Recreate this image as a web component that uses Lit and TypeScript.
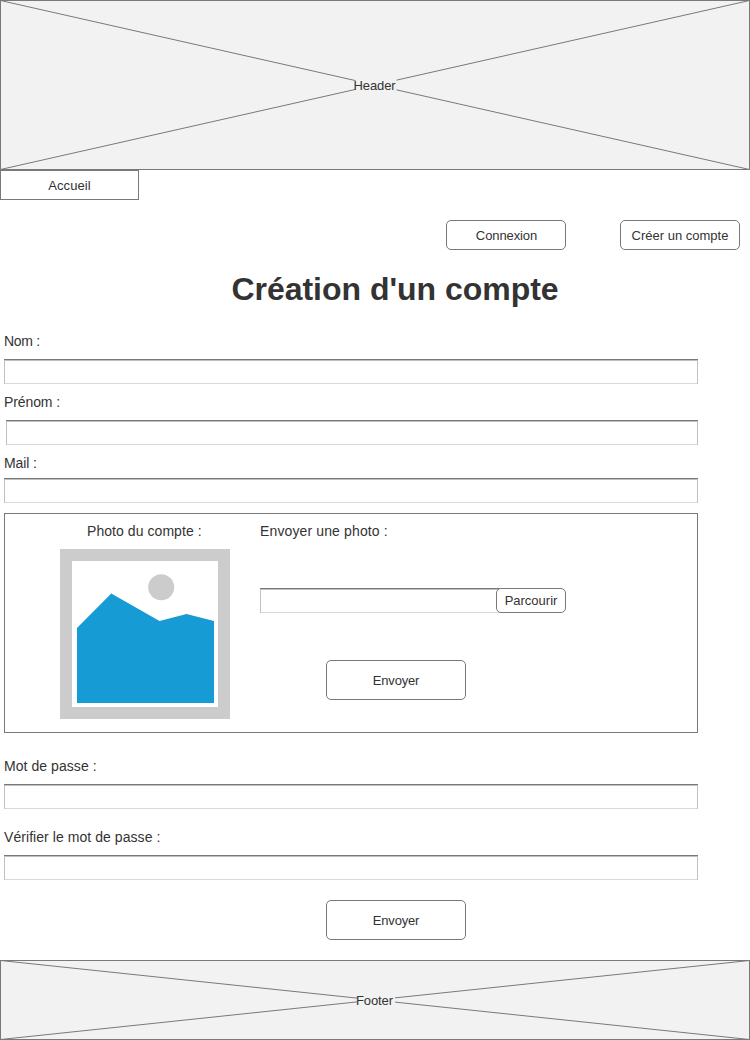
import { LitElement, html, css } from "lit";
import { customElement, property } from "lit/decorators.js";

@customElement("wire-placeholder")
class WirePlaceholder extends LitElement {
  @property() label = "";
  @property({ type: Number }) height = 170;
  @property({ type: Number }) gap = 40;

  static styles = css`
    :host { display: block; }
    .frame { display: grid; place-items: center; background: #f2f2f2; }
    .frame > * { grid-area: 1 / 1; }
    .cross { display: block; }
    .line { stroke: #797979; stroke-width: 1; fill: none; }
    .edge { stroke: #797979; stroke-width: 1; fill: none; shape-rendering: crispEdges; }
    .mask { fill: #f2f2f2; }
    .label { font-size: 13px; line-height: 15px; letter-spacing: -0.1px; padding-right: 1px; }
  `;

  render() {
    const h = this.height;
    return html`<div class="frame">
      <svg class="cross" width="750" height=${h} viewBox="0 0 750 ${h}">
        <path class="line" d="M0.5 0.5L749.5 ${h - 0.5}M0.5 ${h - 0.5}L749.5 0.5" />
        <rect class="mask" x=${375 - this.gap / 2 + 1} y=${h / 2 - 8} width=${this.gap} height="16" />
        <rect class="edge" x="0.5" y="0.5" width="749" height=${h - 1} />
      </svg>
      <span class="label">${this.label}</span>
    </div>`;
  }
}

@customElement("wire-input")
class WireInput extends LitElement {
  static styles = css`
    :host { display: block; height: 25px; }
    .field {
      box-sizing: border-box;
      display: block;
      width: 100%;
      height: 25px;
      margin: 0;
      padding: 0 4px;
      border: 0;
      border-radius: 0;
      outline: 0;
      background: #fff;
      font: 13px "Liberation Sans", Arial, sans-serif;
      color: #333;
      box-shadow: inset 0 1px #797979, inset 0 2px #c0c0c0, inset 1px 0 #c0c0c0, inset -1px 0 #c0c0c0, inset 0 -1px #d9d9d9;
    }
  `;
  render() {
    return html`<input class="field" type="text" />`;
  }
}

@customElement("app-root")
class AppRoot extends LitElement {
  static styles = css`
    :host {
      display: block;
      width: 750px;
      height: 1040px;
      overflow: hidden;
      background: #fff;
      color: #333;
      font-family: "Liberation Sans", Arial, sans-serif;
      font-size: 14px;
      line-height: 16px;
    }
    .btn {
      box-sizing: border-box;
      display: flex;
      align-items: center;
      justify-content: center;
      margin: 0;
      padding: 0;
      border: 1px solid #797979;
      border-radius: 5px;
      background: #fff;
      color: #333;
      font: 13px/15px "Liberation Sans", Arial, sans-serif;
      white-space: nowrap;
      flex: none;
    }
    .tab { width: 139px; height: 30px; border-radius: 0; letter-spacing: 0.12px; }
    .account { display: flex; justify-content: flex-end; gap: 54px; padding: 20px 10px 0 0; }
    .small { width: 120px; height: 30px; }
    .login { letter-spacing: -0.1px; padding-left: 1px; }
    .title { margin: 21px 0 0 40px; text-align: center; font-size: 32px; line-height: 37px; font-weight: 700; letter-spacing: -0.02px; }
    .form { width: 694px; margin: 25px 0 0 4px; display: flex; flex-direction: column; }
    .row { display: flex; flex-direction: column; gap: 10px; margin-bottom: 10px; }
    .indent { margin-left: 2px; }
    .tight { gap: 7px; }
    .narrow { letter-spacing: -0.3px; }
    .snug { letter-spacing: -0.1px; }
    .loose { letter-spacing: 0.06px; }
    .wide { letter-spacing: 0.13px; }
    .panel {
      box-sizing: border-box;
      display: flex;
      height: 220px;
      padding: 9px 0 0 55px;
      border: 1px solid #797979;
      margin-bottom: 25px;
    }
    .photo { width: 170px; display: flex; flex-direction: column; gap: 10px; }
    .caption { padding-left: 27px; }
    .upload { margin-left: 30px; width: 306px; }
    .picker { display: flex; margin-top: 49px; }
    .path { width: 240px; }
    .browse { width: 70px; height: 25px; margin-left: -4px; position: relative; }
    .big { width: 140px; height: 40px; letter-spacing: -0.2px; }
    .send { margin: 47px 0 0 66px; }
    .secret { margin-bottom: 20px; }
    .submit { margin: 0 0 20px 322px; }
  `;

  render() {
    return html`
      <wire-placeholder label="Header" .height=${170} .gap=${41}></wire-placeholder>
      <nav><button class="btn tab">Accueil</button></nav>
      <div class="account">
        <button class="btn small login">Connexion</button>
        <button class="btn small">Créer un compte</button>
      </div>
      <h1 class="title">Création d'un compte</h1>
      <div class="form">
        <div class="row"><span class="narrow">Nom :</span><wire-input></wire-input></div>
        <div class="row"><span class="snug">Prénom :</span><wire-input class="indent"></wire-input></div>
        <div class="row tight"><span class="snug">Mail :</span><wire-input></wire-input></div>
        <div class="panel">
          <div class="photo">
            <span class="caption loose">Photo du compte :</span>
            <svg width="170" height="170" viewBox="0 0 170 170">
              <path fill="#ccc" fill-rule="evenodd" d="M0 0H170V170H0ZM12 12V158H158V12Z" />
              <circle cx="101.2" cy="38.3" r="13" fill="#ccc" />
              <path fill="#169bd5" d="M17 79L51.3 44.5L99.5 72L126.5 65L154 72V154H17Z" />
            </svg>
          </div>
          <div class="upload">
            <span class="wide">Envoyer une photo :</span>
            <div class="picker">
              <wire-input class="path"></wire-input>
              <button class="btn browse">Parcourir</button>
            </div>
            <button class="btn big send">Envoyer</button>
          </div>
        </div>
        <div class="row secret"><span class="loose">Mot de passe :</span><wire-input></wire-input></div>
        <div class="row secret"><span class="loose">Vérifier le mot de passe :</span><wire-input></wire-input></div>
        <button class="btn big submit">Envoyer</button>
      </div>
      <wire-placeholder label="Footer" .height=${80} .gap=${38}></wire-placeholder>
    `;
  }
}
